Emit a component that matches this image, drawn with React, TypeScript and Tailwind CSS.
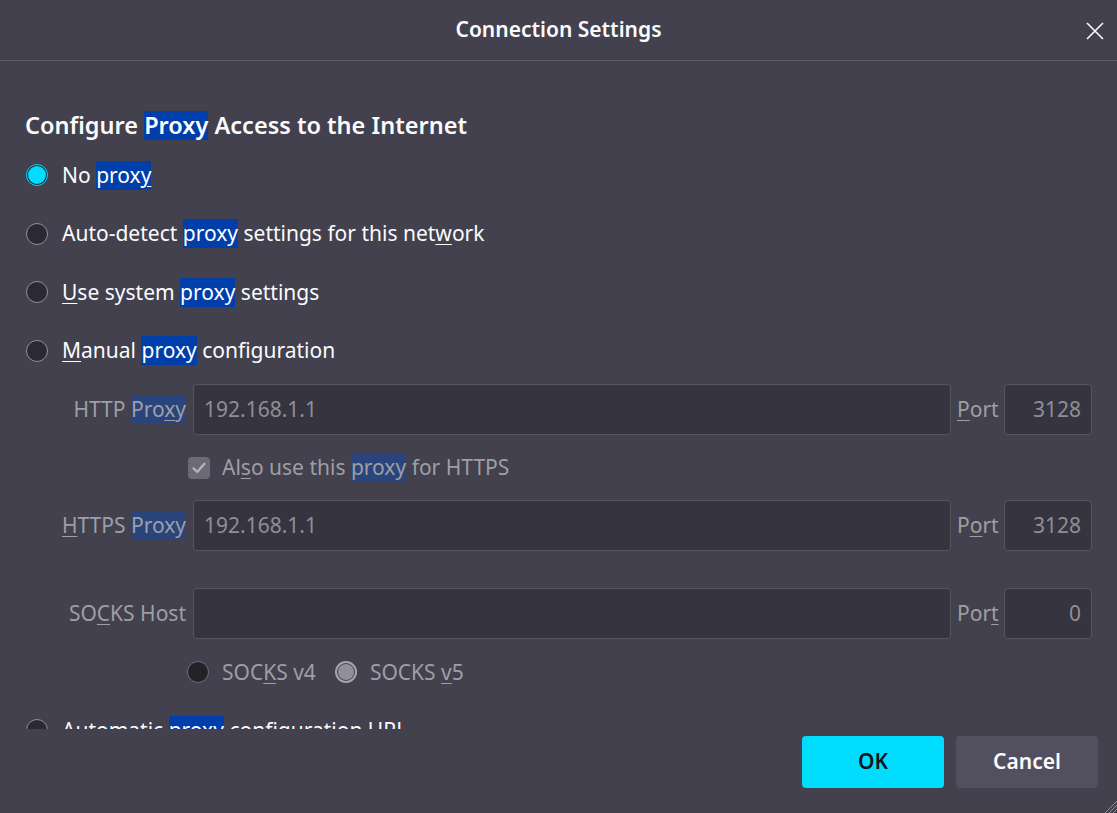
import React from "react";

const FONT = { fontFamily: '"Noto Sans", "Open Sans", sans-serif' };

function Hl({ children, dim }: { children: React.ReactNode; dim?: boolean }) {
  return (
    <span className={`inline-block leading-[29px] ${dim ? "bg-[#2a447c]" : "bg-[#003eaa] text-white"}`}>
      {children}
    </span>
  );
}

function Key({ children }: { children: React.ReactNode }) {
  return <span className="underline decoration-1 underline-offset-[3px]">{children}</span>;
}

function Radio({ checked }: { checked?: boolean }) {
  if (checked) {
    return (
      <span className="flex w-[22px] h-[22px] shrink-0 items-center justify-center rounded-full border border-[#00ddff] bg-[#2b2a33]">
        <span className="w-[18px] h-[18px] rounded-full bg-[#00ddff]" />
      </span>
    );
  }
  return <span className="w-[22px] h-[22px] shrink-0 rounded-full border border-[#8f8f9d] bg-[#2b2a33]" />;
}

function Option({ checked, last, children }: { checked?: boolean; last?: boolean; children: React.ReactNode }) {
  return (
    <div className={`flex items-center gap-[14px] pl-[1px] ${last ? "h-[50px]" : "h-[58.6px]"}`}>
      <Radio checked={checked} />
      <span className="text-[21px] text-[#fbfbfe] whitespace-nowrap">{children}</span>
    </div>
  );
}

function ProxyRow({
  label,
  value,
  port,
  portLabel,
}: {
  label: React.ReactNode;
  value: string;
  port: string;
  portLabel: React.ReactNode;
}) {
  return (
    <div className="flex h-[51px] items-center text-[21px] text-[#9f9ea6]">
      <span className="w-[161px] shrink-0 text-right whitespace-nowrap">{label}</span>
      <div className="ml-[7px] flex h-full flex-1 items-center rounded-[4px] border border-[#57565f] bg-[#36343f] px-[10px] text-[#8f8e97]">
        {value}
      </div>
      <span className="ml-[6px] w-[41px] shrink-0 text-right whitespace-nowrap">{portLabel}</span>
      <div className="ml-[6px] flex h-full w-[88px] shrink-0 items-center justify-end rounded-[4px] border border-[#57565f] bg-[#36343f] px-[10px] text-[#8f8e97]">
        {port}
      </div>
    </div>
  );
}

export default function App() {
  return (
    <div style={FONT} className="relative flex h-[813px] w-[1117px] flex-col overflow-hidden bg-[#42414d] text-[#fbfbfe]">
      {/* title bar */}
      <div className="relative flex h-[61px] shrink-0 items-center justify-center border-b border-[#5c5b67]">
        <span className="text-[21px] font-semibold">Connection Settings</span>
        <button className="absolute right-[12px] top-[21px] flex h-[20px] w-[20px] items-center justify-center">
          <svg width="18" height="18" viewBox="0 0 18 18" fill="none" stroke="#fbfbfe" strokeWidth="1.6">
            <path d="M1 1 L17 17 M17 1 L1 17" />
          </svg>
        </button>
      </div>

      {/* scroll area */}
      <div className="h-[668px] shrink-0 overflow-hidden pl-[25px] pr-[25px]">
        <h1 className="mt-[47px] text-[23.5px] font-semibold leading-[34px] whitespace-nowrap">
          Configure <Hl>Proxy</Hl> Access to the Internet
        </h1>
        <div className="mt-[4px]">
          <Option checked>
            No <Hl>prox<Key>y</Key></Hl>
          </Option>
          <Option>
            Auto-detect <Hl>proxy</Hl> settings for this net<Key>w</Key>ork
          </Option>
          <Option>
            <Key>U</Key>se system <Hl>proxy</Hl> settings
          </Option>
          <Option>
            <Key>M</Key>anual <Hl>proxy</Hl> configuration
          </Option>
        </div>

        <div className="mt-[4px] flex flex-col">
          <ProxyRow
            label={
              <>
                HTTP <Hl dim>Pro<Key>x</Key>y</Hl>
              </>
            }
            value="192.168.1.1"
            portLabel={
              <>
                <Key>P</Key>ort
              </>
            }
            port="3128"
          />
          <div className="flex h-[65px] items-center pl-[163px] text-[21px] text-[#9f9ea6]">
            <span className="flex h-[22px] w-[22px] items-center justify-center rounded-[4px] bg-[#6b6a75]">
              <svg width="14" height="12" viewBox="0 0 14 12" fill="none" stroke="#b4b3bb" strokeWidth="2.4" strokeLinecap="round" strokeLinejoin="round">
                <path d="M1.6 6.4 L5.2 10 L12.4 1.8" />
              </svg>
            </span>
            <span className="ml-[12px] whitespace-nowrap">
              Al<Key>s</Key>o use this <Hl dim>proxy</Hl> for HTTPS
            </span>
          </div>
          <ProxyRow
            label={
              <>
                <Key>H</Key>TTPS <Hl dim>Proxy</Hl>
              </>
            }
            value="192.168.1.1"
            portLabel={
              <>
                P<Key>o</Key>rt
              </>
            }
            port="3128"
          />
          <div className="h-[37px] shrink-0" />
          <ProxyRow
            label={
              <>
                SO<Key>C</Key>KS Host
              </>
            }
            value=""
            portLabel={
              <>
                Por<Key>t</Key>
              </>
            }
            port="0"
          />
          <div className="flex h-[66px] items-center pl-[162px] text-[21px] text-[#9f9ea6]">
            <span className="h-[22px] w-[22px] rounded-full border border-[#6e6d77] bg-[#232229]" />
            <span className="ml-[13px] whitespace-nowrap">
              SOC<Key>K</Key>S v4
            </span>
            <span className="ml-[19px] flex h-[22px] w-[22px] items-center justify-center rounded-full border-[2px] border-[#a6a5ad] bg-[#42414d]">
              <span className="h-[16px] w-[16px] rounded-full bg-[#8f8f9d]" />
            </span>
            <span className="ml-[13px] whitespace-nowrap">
              SOCKS <Key>v</Key>5
            </span>
          </div>
          <Option last>
            Automatic <Hl>proxy</Hl> configuration URL
          </Option>
        </div>
      </div>

      {/* footer */}
      <div className="flex flex-1 items-start justify-end gap-[12px] pr-[19px] pt-[7px]">
        <button className="h-[52px] w-[142px] rounded-[4px] bg-[#00ddff] text-[21px] font-semibold text-[#15141a]">
          OK
        </button>
        <button className="h-[52px] w-[142px] rounded-[4px] bg-[#52505e] text-[21px] font-semibold text-[#fbfbfe]">
          Cancel
        </button>
      </div>

      <svg className="absolute bottom-0 right-0" width="14" height="14" viewBox="0 0 14 14" stroke="#8f8f9d" strokeWidth="1">
        <path d="M14 2 L2 14 M14 6 L6 14 M14 10 L10 14" />
      </svg>
    </div>
  );
}
